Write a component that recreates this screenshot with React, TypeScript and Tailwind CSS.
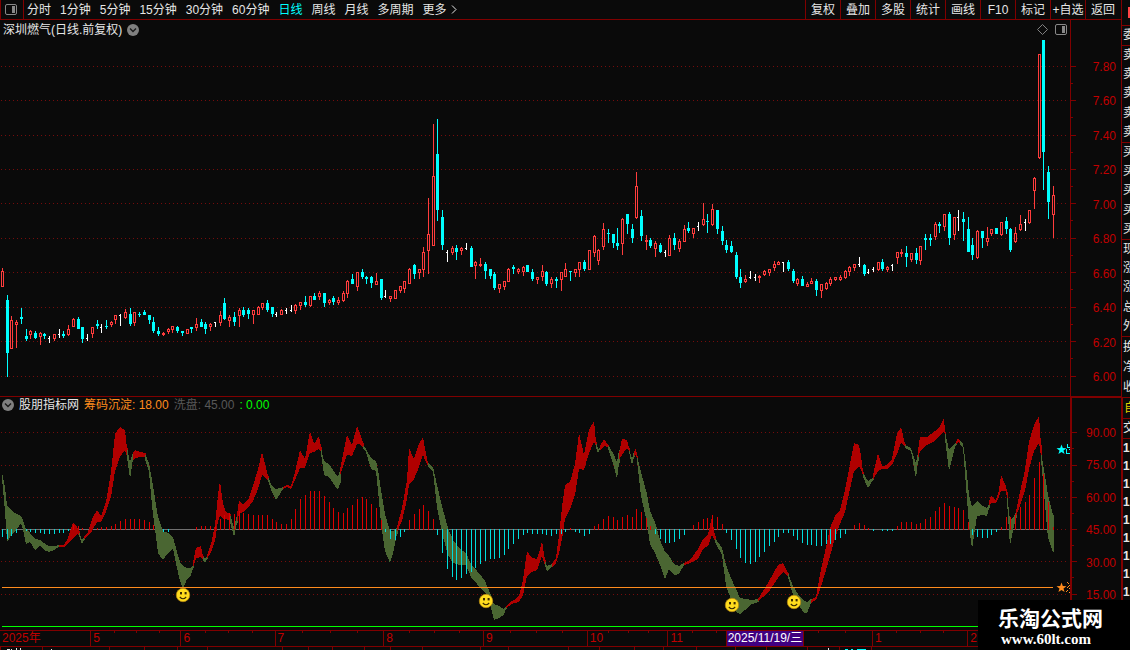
import React from "react";

const BG = "#0a0a0a";

/* kind (r = rise, c = fall, w = flat), centre x, high, body top, body bottom, low */
const CANDLES = `
r2,268,271,287,287 c7,295,300,353,377 r11,316,320,349,349 r16,320,322,325,348 c21,308,317,319,324 c26,329,336,339,341
r30,330,331,335,339 c35,331,333,338,339 r40,332,333,337,345 c44,333,334,336,339 w49,336,338,339,343 r54,334,334,339,341
w59,329,334,335,338 c63,331,334,336,338 r68,325,329,335,336 r73,318,319,327,327 c78,317,319,329,329 c82,327,327,339,343
w87,334,338,339,341 r92,327,327,334,338 c97,320,324,326,329 w101,324,327,328,333 c106,320,326,327,329 r111,321,322,325,327
r115,315,315,320,324 w120,314,315,316,326 r125,309,312,318,319 c130,308,314,324,326 r134,312,312,323,326 c139,312,314,315,317
c144,310,312,315,315 c149,315,315,320,324 c153,317,322,331,333 c158,327,331,334,336 r163,332,333,335,336 r168,328,329,332,334
r172,326,326,330,333 c177,326,327,331,333 c182,331,331,333,336 r187,329,329,334,334 c191,327,327,329,333 r196,318,324,328,331
c201,319,322,327,327 c205,322,324,329,334 r210,323,324,327,331 w215,322,322,323,327 r220,311,315,323,326 c224,298,303,319,320
r229,315,317,321,327 c234,312,317,322,326 r239,308,310,316,327 c243,307,310,315,317 c248,308,310,314,319 r253,310,310,315,324
r258,306,307,315,315 r262,303,303,308,310 c267,300,303,310,312 c272,307,307,314,317 w276,312,314,315,317 r281,309,310,315,315
w286,308,310,311,314 w291,305,310,311,312 r295,304,305,311,314 r300,302,302,306,310 c305,296,302,305,307 r310,296,296,306,307
c314,293,296,300,300 r319,291,293,297,300 c324,293,293,303,307 r329,299,300,303,305 c333,296,298,302,305 r338,297,300,303,305
r343,291,293,301,302 r347,280,281,294,298 c352,274,279,284,284 r357,272,272,287,291 c362,269,272,277,279 c366,276,277,279,284
c371,276,277,283,288 r376,273,281,285,285 c381,279,279,298,300 w385,290,296,297,298 r390,296,296,299,302 r395,290,290,299,299
r400,286,286,291,293 r404,281,281,289,293 r409,268,269,284,284 c414,264,265,274,279 r419,269,269,273,279 r423,247,252,270,277
r428,198,234,251,274 r433,124,176,246,246 c437,119,154,210,221 c442,210,217,245,250 w447,250,252,253,262 r452,246,248,253,255
c456,245,248,252,260 r461,247,248,251,255 w466,243,248,249,250 c471,246,248,267,267 r475,261,262,266,279 r480,258,264,266,267
c485,262,264,271,279 c490,269,269,276,279 c494,272,274,288,290 r499,284,284,289,293 r504,281,281,287,290 r508,268,269,282,282
c513,265,267,269,274 r518,268,269,272,274 r523,266,267,272,276 c527,265,265,272,272 c532,269,272,279,281 r537,277,277,280,284
r542,265,271,277,281 c546,271,272,284,286 r551,277,279,284,288 c556,277,279,281,288 r561,272,272,280,291 r565,263,269,277,277
c570,271,271,272,281 r575,269,269,273,277 r579,262,262,270,277 c584,260,262,269,271 r589,250,250,270,270 r594,235,236,253,257
r598,249,250,261,265 r603,223,229,247,250 c608,229,233,234,243 c613,234,234,243,248 c617,228,243,246,250 r622,218,219,244,255
c627,214,214,224,234 c632,224,229,238,243 r636,172,186,218,219 c641,210,216,236,241 r646,235,240,242,250 c650,238,240,246,248
r655,241,243,249,257 c660,243,245,252,253 w665,250,252,253,257 r669,235,238,256,256 c674,233,238,245,250 r679,239,241,249,252
r684,225,229,242,242 c688,222,228,231,233 r693,228,228,234,238 w698,222,226,227,231 r703,203,219,225,226 c707,214,221,222,233
r712,204,209,225,226 c717,210,210,229,234 c722,226,231,241,245 c726,240,245,250,253 c731,241,246,252,253 c736,252,255,277,279
c740,269,277,283,288 r745,275,279,282,283 w750,271,277,278,279 w755,274,277,278,281 r759,275,276,278,283 r764,270,271,275,276
r769,269,269,273,276 r774,261,264,268,271 r778,261,262,265,265 w783,262,262,263,272 c788,260,262,269,271 c793,269,271,281,283
r797,278,279,284,286 c802,276,279,286,286 r807,282,284,287,287 r811,278,281,284,284 c816,279,281,290,296 r821,284,284,291,298
r826,282,283,289,290 r830,277,279,284,286 r835,277,277,280,281 r840,275,277,280,281 r845,270,271,278,279 r849,266,267,272,276
r854,264,264,268,271 w859,257,264,265,267 c864,264,265,274,276 w868,269,272,273,274 w873,267,269,270,272 r878,262,262,270,271
c882,259,262,269,271 r887,266,267,270,272 w892,264,265,266,271 r897,252,252,258,264 r901,249,252,254,257 c906,246,253,257,267
r911,253,253,260,262 c916,248,253,260,264 r920,246,246,261,265 c925,234,238,240,250 c930,234,238,240,246 r935,222,224,237,240
c939,222,224,226,233 r944,214,214,227,231 c949,212,214,238,245 r954,217,217,235,240 w958,210,217,218,231 c963,212,219,222,241
c968,217,229,252,252 c972,238,245,255,260 r977,230,231,258,259 c982,231,231,238,248 r987,227,238,242,246 r991,229,229,234,236
c996,228,228,234,234 r1001,222,222,235,236 c1006,217,221,229,234 c1010,228,229,250,252 r1015,227,233,242,243 r1020,215,224,230,231
w1025,219,222,223,231 r1029,210,210,223,224 r1034,177,178,191,209 r1039,54,54,158,159 c1043,40,40,152,190 c1048,166,172,202,219
r1053,186,195,215,238`
  .trim()
  .split(/\s+/)
  .map((s) => ({ kind: s[0], v: s.slice(1).split(",").map(Number) }));

/* x:height above (positive) or below (negative) the zero line */
const HISTOGRAM = `
2:-7 7:-9 11:-6 16:-3 26:-1 30:-2 35:-3 40:-3 44:-4 49:-4 54:-4 59:-3 63:-3 68:-1 73:4 78:3 82:1 97:1 101:2 106:2 111:3 115:5 120:8
125:10 130:10 134:10 139:10 144:9 149:7 153:4 163:-2 168:-2 196:2 201:3 205:3 210:3 215:3 220:10 224:14 229:16 234:15 239:18 243:16
248:15 253:14 258:14 262:14 267:14 272:10 276:7 281:5 286:5 291:10 295:20 300:30 305:34 310:38 314:38 319:38 324:33 329:27 333:21
338:17 343:16 347:21 352:24 357:30 362:32 366:30 371:25 376:21 381:9 385:-2 390:-9 395:-10 400:-7 404:-2 409:9 414:15 419:20 423:24
428:18 433:10 437:-5 442:-23 447:-39 452:-47 456:-50 461:-48 466:-44 471:-42 475:-38 480:-34 485:-31 490:-29 494:-29 499:-28 504:-25
508:-19 513:-14 518:-9 523:-5 527:-3 532:-4 537:-4 542:-4 546:-5 551:-6 556:-4 561:-4 565:-2 570:1 575:-2 579:-3 584:-6 589:-4 594:3
598:5 603:10 608:13 613:12 617:9 622:12 627:14 632:12 636:20 641:17 646:11 650:3 655:-4 660:-9 665:-13 669:-13 674:-12 679:-9 684:-5
693:4 698:7 703:10 707:11 712:14 717:12 722:5 726:-3 731:-10 736:-19 740:-28 745:-33 750:-34 755:-32 759:-27 764:-22 769:-16 774:-12
778:-7 783:-3 788:-3 793:-6 797:-10 802:-13 807:-15 811:-15 816:-16 821:-16 826:-14 830:-14 835:-10 840:-8 845:-4 854:4 859:6 864:4
868:1 873:-1 882:-1 887:-1 892:-1 897:3 901:7 906:7 911:7 916:5 920:6 925:10 930:12 935:18 939:22 944:26 949:23 954:22 958:21 963:19
968:7 972:-5 977:-7 982:-8 987:-8 991:-5 996:-2 1001:2 1006:12 1010:12 1015:15 1020:22 1025:27 1029:34 1034:51 1039:67 1043:55
1048:27 1053:2`
  .trim()
  .split(/\s+/)
  .map((s) => s.split(":").map(Number));

/* one line per run of colour: x,top,bottom points */
const RIBBON = `
g 2,473,477 5,487,510 7,506,541 12,511,533 17,514,528 21,516,522 23,520,528 26,529,543 30,533,541 35,539,549 40,540,545 44,543,549 49,546,551 54,546,549 59,545,546
r 59,545,546 64,545,546 68,538,543 73,523,537 77,527,533 79,531,534
g 79,531,534 82,540,543 84,537,539
r 84,537,539 88,532,534 92,519,530 97,510,521 101,516,521 106,502,511 111,472,496 115,434,470 120,427,456 125,430,449 127,448,455
g 127,448,456 130,462,478 132,455,465 133,453,458
r 133,453,459 135,450,457 140,452,456 145,453,456
g 145,454,458 149,463,471 152,480,505 158,517,552 163,531,559 168,533,552 173,537,547 177,552,567 180,562,580 183,566,588 187,568,578 191,568,574 193,565,567
r 193,563,567 196,548,557 201,546,556 203,556,559
g 203,556,559 205,559,562 207,556,558
r 207,556,558 211,544,551 215,525,540 218,495,520 220,481,515 223,504,518 226,512,518 230,514,520
g 230,514,521 234,528,536 237,515,522
r 237,515,522 239,501,513 243,504,511 248,500,507 253,486,500 258,469,488 262,452,474 268,476,479
g 268,477,479 272,486,491 276,489,499 280,488,493 283,487,488
r 283,487,488 287,485,486 291,486,488 295,472,479 300,450,467 305,459,467 310,431,452 314,444,451 319,436,448 321,447,451
g 321,448,452 324,461,474 329,464,476 333,470,482 338,477,489 340,471,482
r 340,470,474 347,435,454 352,445,455 357,426,443 360,433,443 363,443,447
g 363,445,447 366,449,451 371,458,468 376,461,470 378,470,490 381,490,522 385,514,550 390,531,562 393,531,553 397,527,533
r 397,527,531 402,508,520 407,480,498 409,448,483 414,459,478 419,444,466 423,437,454 425,449,459 428,463,465
g 428,463,466 433,467,471 437,485,506 442,506,532 448,528,554 453,540,562 460,549,564 466,553,564 471,564,576 477,571,583 482,577,589 485,581,591 490,593,603 494,604,619 499,606,617 504,609,614 506,606,608
r 506,606,607 509,603,605 514,600,602 519,596,601 523,580,594 527,551,575 532,558,571 537,559,569 540,549,561 542,541,555 545,560,565
g 545,561,564 547,566,570 552,564,566
r 552,564,566 556,558,562 559,535,553 562,507,538 565,485,518 570,482,508 575,464,494 579,433,468 584,455,469 589,430,452 594,421,441 596,442,445
g 596,442,446 598,449,452 600,447,448
r 600,446,449 604,439,445 608,445,446
g 608,445,447 613,453,462 617,462,478 619,450,462
r 619,453,459 622,439,454 627,440,447 629,448,450
g 629,449,451 632,459,464 634,451,456
r 634,452,455 636,448,453 637,456,458
g 637,456,459 641,472,495 647,494,522 650,511,543 655,522,552 660,540,564 665,552,578 669,556,568 674,564,574 679,566,573 684,563,564
r 684,563,564 690,560,562 698,549,558 703,539,548 708,534,545 712,517,534 715,536,540
g 715,538,541 722,548,554 726,565,585 731,578,598 736,589,611 740,598,613 745,599,609 752,600,603 758,599,601
r 758,599,600 768,583,592 778,565,577 783,563,571 788,573,575
g 788,573,576 793,586,594 800,597,606 804,601,612 807,602,612 811,599,602
r 811,600,602 816,597,599 820,574,589 826,547,569 830,528,555 835,516,537 840,510,523 845,490,511 850,464,488 854,443,470 859,445,465 861,456,469 863,472,474
g 863,473,476 868,481,487 873,478,479
r 873,475,479 878,453,470 882,466,468 887,465,468 892,459,464 897,434,453 901,427,442 905,444,446
g 905,445,447 911,448,450 916,463,478 918,452,460
r 918,450,458 920,437,450 927,437,444 935,431,440 940,426,434 944,418,430 945,432,434
g 945,432,438 949,450,470 954,444,450 956,443,444
r 956,442,443 958,438,441 960,441,443
g 960,441,443 963,443,447 966,465,485 969,495,525 972,507,548 977,501,515 983,506,514 987,508,515 989,504,507
r 989,502,505 991,496,502 996,500,502 999,490,496 1001,475,490 1006,486,490 1007,492,497
g 1007,493,500 1010,520,545 1014,516,525 1016,512,517
r 1016,511,515 1020,492,505 1025,470,490 1029,442,468 1034,425,450 1039,416,442 1041,445,455
g 1041,452,458 1046,482,515 1048,495,537 1053,515,551`
  .trim()
  .split("\n")
  .map((line) => {
    const [color, ...rest] = line.trim().split(" ");
    const pts = rest.map((p) => p.split(",").map(Number));
    const top = pts.map(([x, t]) => `${x},${t}`);
    const bottom = pts.map(([x, , b]) => `${x},${b + 1}`).reverse();
    const last = pts[pts.length - 1];
    const end = [`${last[0] + 1},${last[1]}`, `${last[0] + 1},${last[2] + 1}`];
    return { color, points: [...top, ...end, ...bottom].join(" ") };
  });

const PRICE_ROWS = [66, 100, 135, 169, 203, 238, 272, 307, 341, 376];
const PRICE_LABELS = ["7.80", "7.60", "7.40", "7.20", "7.00", "6.80", "6.60", "6.40", "6.20", "6.00"];
const LEVEL_ROWS = [432, 465, 497, 529, 561, 594];
const LEVEL_LABELS = ["90.00", "75.00", "60.00", "45.00", "30.00", "15.00"];

const PERIODS = ["分时", "1分钟", "5分钟", "15分钟", "30分钟", "60分钟", "日线", "周线", "月线", "多周期", "更多"];
const ACTIONS = ["复权", "叠加", "多股", "统计", "画线", "F10", "标记", "+自选", "返回"];

const MONTHS: { label: string; span: number; selected?: boolean }[] = [
  { label: "2025年", span: 91 },
  { label: "5", span: 90 },
  { label: "6", span: 94 },
  { label: "7", span: 109 },
  { label: "8", span: 100 },
  { label: "9", span: 104 },
  { label: "10", span: 80 },
  { label: "11", span: 57 },
  { label: "2025/11/19/三", span: 79, selected: true },
  { label: "", span: 68 },
  { label: "1", span: 95 },
  { label: "2", span: 103 },
];
const WEEK_TICKS = [114, 136, 159, 205, 228, 252, 302, 330, 357, 409, 434, 459, 510, 536, 562, 608, 628, 648, 692, 716, 818, 845, 896, 920, 943];
const LOWER_TICKS = [0, 42, 109, 144, 177, 207, 282, 308, 332, 364, 390, 422, 480, 508, 568, 599, 634, 663, 696, 735, 766, 807, 839, 871];

function PanelIcon() {
  return (
    <svg width="12" height="11" viewBox="0 0 12 11" className="shrink-0">
      <rect x="0.5" y="0.5" width="11" height="10" rx="1.5" fill="none" stroke="#888888" />
      <rect x="7" y="2" width="3" height="7" fill="#888888" />
    </svg>
  );
}

function ChevronBadge() {
  return (
    <svg width="12" height="12" viewBox="0 0 12 12" className="shrink-0">
      <circle cx="6" cy="6" r="6" fill="#808080" />
      <path d="M3 4.5 6 7.5 9 4.5" fill="none" stroke="#1a1a1a" strokeWidth="1.4" />
    </svg>
  );
}

function Grid({ rows }: { rows: number[] }) {
  return (
    <g stroke="#760c0c" strokeDasharray="1 3">
      {rows.map((y) => (
        <line key={y} x1="1" x2="1067" y1={y + 0.5} y2={y + 0.5} />
      ))}
    </g>
  );
}

function PriceChart() {
  return (
    <svg viewBox="0 40 1070 356" preserveAspectRatio="none" shapeRendering="crispEdges" className="block min-h-0 w-full flex-1">
      <Grid rows={PRICE_ROWS} />
      {CANDLES.map(({ kind, v: [x, high, top, bottom, low] }) => {
        if (kind === "w") {
          return (
            <g key={x} fill="#ffffff">
              <rect x={x} y={high} width="1" height={low - high} />
              <rect x={x - 1} y={top} width="1" height="1" />
            </g>
          );
        }
        const fill = kind === "r" ? "#ff3c3c" : "#00ffff";
        return (
          <g key={x} fill={fill}>
            <rect x={x} y={high} width="1" height={low - high} />
            <rect x={x - 1} y={top} width="3" height={bottom - top} />
            {kind === "r" && bottom - top > 2 && <rect x={x} y={top + 1} width="1" height={bottom - top - 2} fill={BG} />}
          </g>
        );
      })}
    </svg>
  );
}

function Smiley({ x, y }: { x: number; y: number }) {
  return (
    <g shapeRendering="geometricPrecision">
      <circle cx={x} cy={y} r="6.7" fill="#ffdc1e" stroke="#b98a10" strokeWidth="0.8" />
      <rect x={x - 3} y={y - 3} width="2" height="2.4" fill="#3a2a00" />
      <rect x={x + 1.6} y={y - 3} width="2" height="2.4" fill="#3a2a00" />
      <path d={`M${x - 3.2} ${y + 2} Q${x} ${y + 5.4} ${x + 3.2} ${y + 2}`} fill="none" stroke="#3a2a00" strokeWidth="1.1" />
    </g>
  );
}

function Star({ x, y, color }: { x: number; y: number; color: string }) {
  return (
    <path
      shapeRendering="geometricPrecision"
      transform={`translate(${x} ${y})`}
      d="M0-5 1.3-1.4 5-1.3 2 1 3.1 4.6 0 2.5-3.1 4.6-2 1-5-1.3-1.3-1.4Z"
      fill={color}
    />
  );
}

function IndicatorChart() {
  return (
    <svg viewBox="0 414 1070 216" preserveAspectRatio="none" shapeRendering="crispEdges" className="block min-h-0 w-full flex-1">
      <Grid rows={LEVEL_ROWS} />
      <rect x="2" y="529" width="1051" height="1" fill="#707070" />
      {RIBBON.map((r, i) => (
        <polygon key={i} points={r.points} fill={r.color === "r" ? "#b00000" : "#4a6632"} />
      ))}
      {HISTOGRAM.map(([x, h]) => (
        <rect key={x} x={x} y={h > 0 ? 529 - h : 529} width="1" height={Math.abs(h) + 1} fill={h > 0 ? "#dc0000" : "#00dcdc"} />
      ))}
      <rect x="2" y="587" width="1051" height="1" fill="#ff8c1e" />
      <rect x="2" y="626" width="1068" height="1" fill="#00ff00" />
      <Smiley x={183} y={595} />
      <Smiley x={486} y={601} />
      <Smiley x={732} y={605} />
      <Smiley x={794} y={602} />
      <Star x={1061.5} y={449.5} color="#00ffff" />
      <path d="M1067 444h1v3h2v1h-3zM1066 449h1v4h3v1h-4zM1069 449h1v1h-1z" fill="#00ffff" />
      <Star x={1061.5} y={587.5} color="#ff8c1e" />
      <path d="M1067 582h1v1h-1zM1068 583h1v1h-1zM1069 585h1v1h-1zM1068 586h1v1h-1zM1067 587h1v1h-1zM1069 588h1v1h-1zM1067 590h1v1h-1zM1066 591h1v1h-1zM1069 592h1v1h-1z" fill="#ff8c1e" />
    </svg>
  );
}

function AxisTicks({ top, height, rows }: { top: number; height: number; rows: number[] }) {
  return (
    <svg viewBox={`0 ${top} 5 ${height}`} preserveAspectRatio="none" shapeRendering="crispEdges" className="block h-full w-[5px] shrink-0" fill="#800000">
      {rows.map((y, i) => (
        <g key={y}>
          <rect x="0" y={y} width="5" height="1" />
          {i + 1 < rows.length && <rect x="0" y={Math.floor((y + rows[i + 1]) / 2)} width="2" height="1" />}
        </g>
      ))}
    </svg>
  );
}

function Sidebar() {
  const groups = [
    { text: ["委"], box: "h-[20px]" },
    { text: ["卖", "卖", "卖", "卖", "卖"], box: "h-[97px]" },
    { text: ["买", "买", "买", "买", "买"], box: "h-[97px]" },
    { text: ["现", "涨", "涨", "总", "外"], box: "h-[97px]" },
    { text: ["换", "净", "收"], box: "h-[61px]" },
  ];
  return (
    <aside className="flex w-[9px] shrink-0 flex-col overflow-hidden border-l border-[#800000] text-[12px] whitespace-nowrap text-[#e6e6e6]">
      <div className="flex h-[25px] shrink-0 items-center pl-1.5">
        <span className="h-[11px] w-1 bg-[#ff4444]" />
      </div>
      {groups.map((g, i) => (
        <div key={i} className={`flex shrink-0 flex-col justify-around border-t border-[#800000] pl-px leading-[19px] ${g.box}`}>
          {g.text.map((t, j) => (
            <span key={j}>{t}</span>
          ))}
        </div>
      ))}
      <div className="h-[21px] shrink-0 border-t border-l border-[#800000] pl-px leading-[20px] text-[#e0d000]">自</div>
      <div className="h-[20px] shrink-0 border-t border-l border-[#800000] leading-[19px]">交</div>
      <div className="flex-1 border-t border-l border-[#800000] leading-[18px] font-bold">
        {Array.from({ length: 9 }, (_, i) => (
          <div key={i}>1</div>
        ))}
      </div>
    </aside>
  );
}

export default function App() {
  return (
    <div className="relative flex h-screen overflow-hidden bg-[#0a0a0a] font-['Liberation_Sans','Noto_Sans_CJK_SC',sans-serif] text-[12px] leading-[18px] text-[#e6e6e6]">
      <div className="flex min-w-0 flex-1 flex-col">
        <header className="flex h-5 shrink-0 justify-between border-b border-l border-[#800000]">
          <nav className="flex items-center">
            <button type="button" aria-label="侧栏" className="mr-[3px] flex h-full w-[23px] items-center border-r border-[#800000] pl-1">
              <PanelIcon />
            </button>
            <div className="flex items-center gap-[9px]">
              {PERIODS.map((p) => (
                <button key={p} type="button" className={p === "日线" ? "text-[#00ffff]" : ""}>
                  {p}
                </button>
              ))}
            </div>
            <svg width="6" height="9" viewBox="0 0 6 9" className="ml-1">
              <path d="M1 0.500 5 4.500 1 8.500" fill="none" stroke="#e6e6e6" />
            </svg>
          </nav>
          <div className="flex pr-px">
            {ACTIONS.map((a) => (
              <button key={a} type="button" className="w-[35px] border-l border-[#800000] text-center whitespace-nowrap">
                {a}
              </button>
            ))}
          </div>
        </header>

        <div className="grid min-h-0 flex-1 grid-cols-[minmax(0,1fr)_51px] grid-rows-[minmax(0,376fr)_minmax(0,234fr)_16px_4px]">
          <section className="flex min-h-0 flex-col">
            <div className="flex h-5 shrink-0 items-center gap-[5px] pr-[3px] pb-px pl-[3px]">
              <span>深圳燃气(日线.前复权)</span>
              <ChevronBadge />
              <svg width="11" height="11" viewBox="0 0 11 11" className="mr-0.5 ml-auto">
                <path d="M5.500 0.500 10.500 5.500 5.500 10.500 0.500 5.500Z" fill="none" stroke="#808080" />
              </svg>
              <PanelIcon />
            </div>
            <PriceChart />
          </section>
          <div className="flex min-h-0 border-l border-[#800000]">
            <AxisTicks top={20} height={376} rows={PRICE_ROWS} />
            <div className="flex flex-1 flex-col justify-between pt-[38px] pr-[5px] pb-[10px] text-right text-[#c00000]">
              {PRICE_LABELS.map((l) => (
                <span key={l}>{l}</span>
              ))}
            </div>
          </div>

          <section className="flex min-h-0 flex-col border-t border-[#800000]">
            <div className="flex h-[17px] shrink-0 items-center gap-[5px] pb-px pl-0.5">
              <ChevronBadge />
              <span>股朋指标网</span>
              <span className="text-[#ff8c1e]">筹码沉淀: 18.00</span>
              <span className="text-[#585858]">洗盘: 45.00</span>
              <span className="text-[#00ff00]">: 0.00</span>
            </div>
            <IndicatorChart />
          </section>
          <div className="flex min-h-0 border-t-2 border-l-2 border-[#800000]">
            <AxisTicks top={398} height={232} rows={LEVEL_ROWS} />
            <div className="flex flex-1 flex-col justify-between pt-[26px] pr-[5px] pb-[26px] text-right text-[#c00000]">
              {LEVEL_LABELS.map((l) => (
                <span key={l}>{l}</span>
              ))}
            </div>
          </div>

          <div className="relative flex min-w-0 border-t border-[#800000] leading-[15px] text-[#c00000]">
            {MONTHS.map((m, i) => (
              <div
                key={i}
                style={{ flexGrow: m.span }}
                className={
                  m.selected
                    ? "basis-0 overflow-hidden border-x border-[#800000] bg-[#400080] text-center whitespace-nowrap text-white"
                    : i === 0 || m.label === ""
                      ? "basis-0 overflow-hidden pl-0.5 whitespace-nowrap"
                      : "basis-0 overflow-hidden border-l border-[#800000] pl-0.5 whitespace-nowrap"
                }
              >
                {m.label}
              </div>
            ))}
            <svg viewBox="0 0 1070 2" preserveAspectRatio="none" shapeRendering="crispEdges" className="absolute inset-x-0 top-0 h-0.5 w-full" fill="#800000">
              {WEEK_TICKS.map((x) => (
                <rect key={x} x={x} y="0" width="1" height="2" />
              ))}
            </svg>
          </div>
          <div className="border-t border-[#800000]" />

          <div className="border-t border-[#800000]">
            <svg viewBox="0 647 1070 3" preserveAspectRatio="none" shapeRendering="crispEdges" className="block h-[3px] w-full" fill="#800000">
              {LOWER_TICKS.map((x) => (
                <rect key={x} x={x} y="647" width="1" height="3" />
              ))}
              <path d="M7 649h3v1h-3zM11 649h1v1h-1zM16 648h1v2h-1zM20 648h1v2h-1zM51 649h1v1h-1zM828 648h1v2h-1z" fill="#e6e6e6" />
              <path d="M845 649h3v1h-3zM851 649h2v1h-2zM857 649h9v1h-9z" fill="#00ffff" />
            </svg>
          </div>
          <div className="border-t border-[#800000]" />
        </div>
      </div>

      <Sidebar />

      <div className="absolute right-0 bottom-0 flex h-[50px] w-[152px] flex-col bg-black pl-5 text-white">
        <strong className="text-[21px] leading-[38px] whitespace-nowrap">乐淘公式网</strong>
        <span className="pl-[3px] font-['Liberation_Serif',serif] text-[15px] leading-[2px] font-bold">www.60lt.com</span>
      </div>
    </div>
  );
}
